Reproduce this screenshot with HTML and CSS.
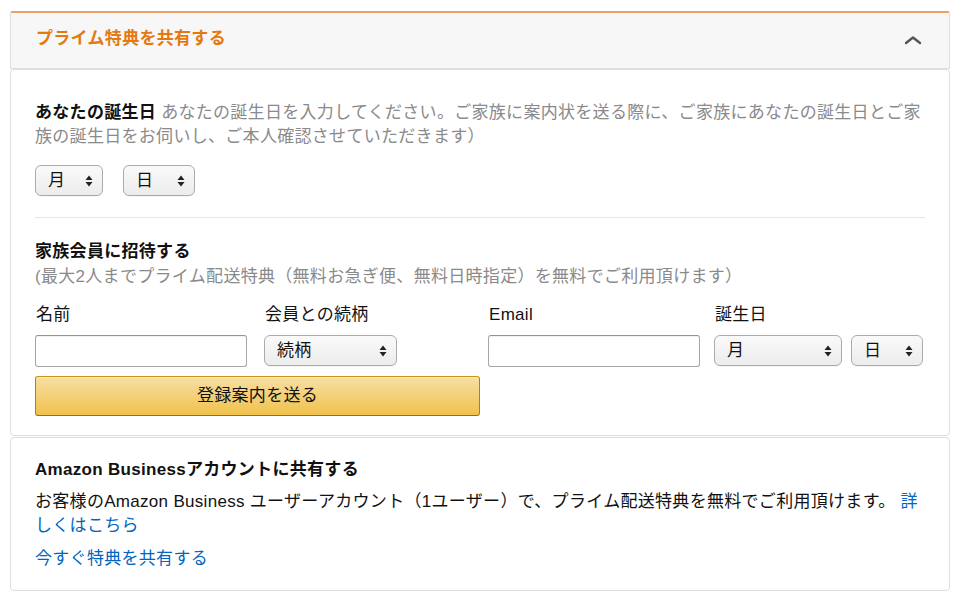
FILE: index.html
```html
<!DOCTYPE html>
<html lang="ja">
<head>
<meta charset="utf-8">
<title>プライム特典を共有する</title>
<link rel="stylesheet" href="styles.css">
</head>
<body>
<div class="wrap">
  <div class="header">
    <h2 class="header-title">プライム特典を共有する</h2>
    <svg class="chevron" width="18" height="10" viewBox="0 0 18 10"><path d="M2 8 L9 2.5 L16 8" fill="none" stroke="#555" stroke-width="2.4" stroke-linecap="round" stroke-linejoin="round"/></svg>
  </div>

  <div class="card card-main">
    <p class="desc"><span class="strong">あなたの誕生日</span> <span class="muted">あなたの誕生日を入力してください。ご家族に案内状を送る際に、ご家族にあなたの誕生日とご家族の誕生日をお伺いし、ご本人確認させていただきます）</span></p>
    <div class="select-row">
      <div class="select w-68"><span>月</span><svg class="arr" width="8" height="12" viewBox="0 0 8 12"><path d="M4 0.5 L7.5 5 H0.5 Z M4 11.5 L7.5 7 H0.5 Z" fill="#222"/></svg></div>
      <div class="select w-72"><span>日</span><svg class="arr" width="8" height="12" viewBox="0 0 8 12"><path d="M4 0.5 L7.5 5 H0.5 Z M4 11.5 L7.5 7 H0.5 Z" fill="#222"/></svg></div>
    </div>
    <hr class="divider">
    <h3 class="section-title">家族会員に招待する</h3>
    <p class="muted sub">(最大2人までプライム配送特典（無料お急ぎ便、無料日時指定）を無料でご利用頂けます）</p>
    <div class="form-grid">
      <label class="lbl">名前</label>
      <label class="lbl">会員との続柄</label>
      <label class="lbl">Email</label>
      <label class="lbl">誕生日</label>
      <div class="input"></div>
      <div class="cell"><div class="select w-133"><span>続柄</span><svg class="arr" width="8" height="12" viewBox="0 0 8 12"><path d="M4 0.5 L7.5 5 H0.5 Z M4 11.5 L7.5 7 H0.5 Z" fill="#222"/></svg></div></div>
      <div class="input"></div>
      <div class="cell birth">
        <div class="select w-128"><span>月</span><svg class="arr" width="8" height="12" viewBox="0 0 8 12"><path d="M4 0.5 L7.5 5 H0.5 Z M4 11.5 L7.5 7 H0.5 Z" fill="#222"/></svg></div>
        <div class="select w-72"><span>日</span><svg class="arr" width="8" height="12" viewBox="0 0 8 12"><path d="M4 0.5 L7.5 5 H0.5 Z M4 11.5 L7.5 7 H0.5 Z" fill="#222"/></svg></div>
      </div>
    </div>
    <div class="btn">登録案内を送る</div>
  </div>

  <div class="card card-biz">
    <h3 class="section-title">Amazon Businessアカウントに共有する</h3>
    <p class="biz-text">お客様のAmazon Business ユーザーアカウント（1ユーザー）で、プライム配送特典を無料でご利用頂けます。 <a class="link" href="#">詳しくはこちら</a></p>
    <p class="biz-link"><a class="link" href="#">今すぐ特典を共有する</a></p>
  </div>
</div>
</body>
</html>
```

FILE: styles.css
```css
* { box-sizing: border-box; }
html, body { margin: 0; padding: 0; background: #fff; }
body {
  font-family: "Liberation Sans", "Noto Sans CJK JP", Arial, sans-serif;
  font-size: 17px;
  line-height: 24px;
  letter-spacing: 0.3px;
  color: #111;
}
.wrap {
  margin: 11px 10px 0 10px;
  width: 940px;
}
.header {
  height: 58px;
  background: #f7f7f7;
  border: 1px solid #e0e0e0;
  border-top: 2px solid #e9a263;
  border-radius: 2px 2px 0 0;
  display: flex;
  align-items: center;
  justify-content: space-between;
  padding: 0 27px 0 25px;
}
.header-title {
  margin: 0;
  font-size: 17px;
  font-weight: bold;
  color: #e47911;
  line-height: 24px;
  padding-bottom: 4px;
}
.chevron { display: block; margin-bottom: 2px; }
.card {
  background: #fff;
  border: 1px solid #dddddd;
  border-radius: 4px;
}
.card-main {
  padding: 31px 24px 19px 24px;
}
.desc { margin: 0; }
.strong { font-weight: bold; color: #111; }
.muted { color: #8a8a8a; }
.select-row {
  display: flex;
  gap: 20px;
  margin-top: 16px;
}
.select {
  height: 31px;
  border: 1px solid #a8abb0;
  border-radius: 6px;
  background: linear-gradient(#fafafa, #ececec);
  display: flex;
  align-items: center;
  justify-content: space-between;
  padding: 0 9px 0 12px;
  font-size: 17px;
  color: #111;
  box-shadow: 0 1px 0 rgba(0,0,0,0.04);
}
.select span { line-height: 20px; }
.arr { display: block; }
.w-68 { width: 68px; }
.w-72 { width: 72px; }
.w-128 { width: 128px; }
.w-133 { width: 133px; }
.divider {
  border: 0;
  border-top: 1px solid #e7e7e7;
  margin: 21px 0 22px 0;
  height: 0;
}
.section-title {
  margin: 0;
  font-size: 17px;
  font-weight: bold;
  line-height: 24px;
  color: #111;
}
.sub { margin: 1px 0 0 0; }
.form-grid {
  display: grid;
  grid-template-columns: 212px 207px 209px 1fr;
  column-gap: 17px;
  row-gap: 8px;
  margin-top: 14px;
}
.lbl { display: block; line-height: 24px; padding-left: 1px; }
.input {
  width: 212px;
  height: 32px;
  border: 1px solid #a6a6a6;
  border-top-color: #949494;
  border-radius: 3px;
  background: #fff;
  box-shadow: inset 0 1px 0 rgba(0,0,0,0.05);
}
.cell { display: flex; }
.birth { gap: 9px; }
.btn {
  margin-top: 9px;
  width: 445px;
  height: 40px;
  border: 1px solid;
  border-color: #c89411 #b0820f #99710d;
  border-radius: 3px;
  background: linear-gradient(#f7dfa5, #f0c14b);
  display: flex;
  align-items: center;
  justify-content: center;
  font-size: 17px;
  color: #111;
  box-shadow: inset 0 1px 0 rgba(255,255,255,0.4);
}
.card-biz {
  margin-top: 1px;
  padding: 20px 24px 19px 24px;
}
.biz-text { margin: 8px 0 0 0; }
.biz-link { margin: 9px 0 0 0; }
.link { color: #0066c0; text-decoration: none; }
```
